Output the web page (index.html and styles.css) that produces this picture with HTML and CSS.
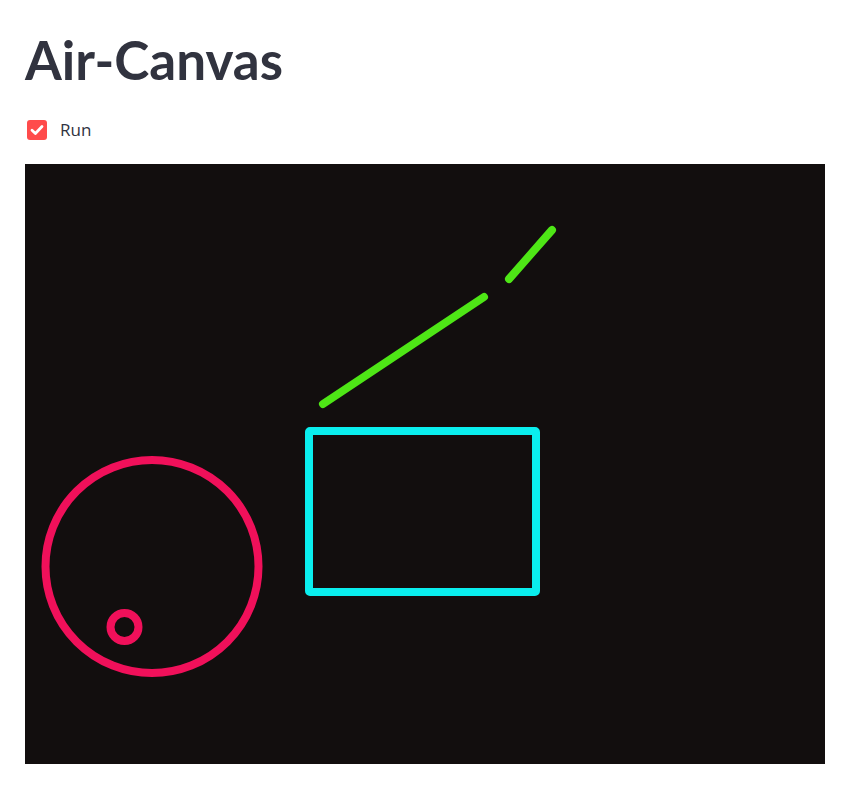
FILE: index.html
```html
<!DOCTYPE html>
<html>
<head>
<meta charset="utf-8">
<link rel="stylesheet" href="styles.css">
</head>
<body>
<main class="app">
  <h1 class="title">Air-Canvas</h1>
  <label class="checkbox">
    <span class="box">
      <svg width="20" height="20" viewBox="0 0 20 20"><rect x="0" y="0" width="20" height="20" rx="3" fill="#ff4b4b"/><path d="M5 10.2 L8.4 13.4 L15 6.6" fill="none" stroke="#fff" stroke-width="2.8" stroke-linecap="round" stroke-linejoin="round"/></svg>
    </span>
    <span class="label">Run</span>
  </label>
  <div class="frame">
    <svg class="canvas" width="800" height="600" viewBox="0 0 800 600">
      <rect x="0" y="0" width="800" height="600" fill="#120e0e"/>
      <g fill="none" stroke-linecap="round" stroke-linejoin="round" stroke-width="8">
        <line x1="298" y1="240" x2="459" y2="133" stroke="#4ee616"/>
        <line x1="484" y1="115" x2="527" y2="66" stroke="#4ee616"/>
        <rect x="284" y="267" width="227" height="161" stroke="#0aeeee" rx="1"/>
        <circle cx="127" cy="402.5" r="106.5" stroke="#f0105a"/>
        <circle cx="99.5" cy="463" r="14" stroke="#f0105a"/>
      </g>
    </svg>
  </div>
</main>
</body>
</html>
```
FILE: styles.css
```css
html, body {
  margin: 0;
  padding: 0;
  background: #ffffff;
}
.app {
  display: flex;
  flex-direction: column;
  align-items: flex-start;
  padding: 28px 25px 0 25px;
  font-family: "Open Sans", "Noto Sans", sans-serif;
  color: #31333f;
}
.title {
  margin: 0;
  font-family: "Lato", "Open Sans", sans-serif;
  font-weight: 700;
  font-size: 53px;
  line-height: 1.2;
  letter-spacing: 0;
  color: #31333f;
}
.checkbox {
  display: flex;
  align-items: center;
  gap: 13px;
  margin-top: 27px;
  margin-left: 2px;
  height: 22px;
}
.box {
  display: flex;
  width: 20px;
  height: 20px;
}
.label {
  font-size: 17px;
  line-height: 22px;
  color: #31333f;
}
.frame {
  margin-top: 23px;
  width: 800px;
  height: 600px;
  display: flex;
}
.canvas {
  display: block;
}
```
